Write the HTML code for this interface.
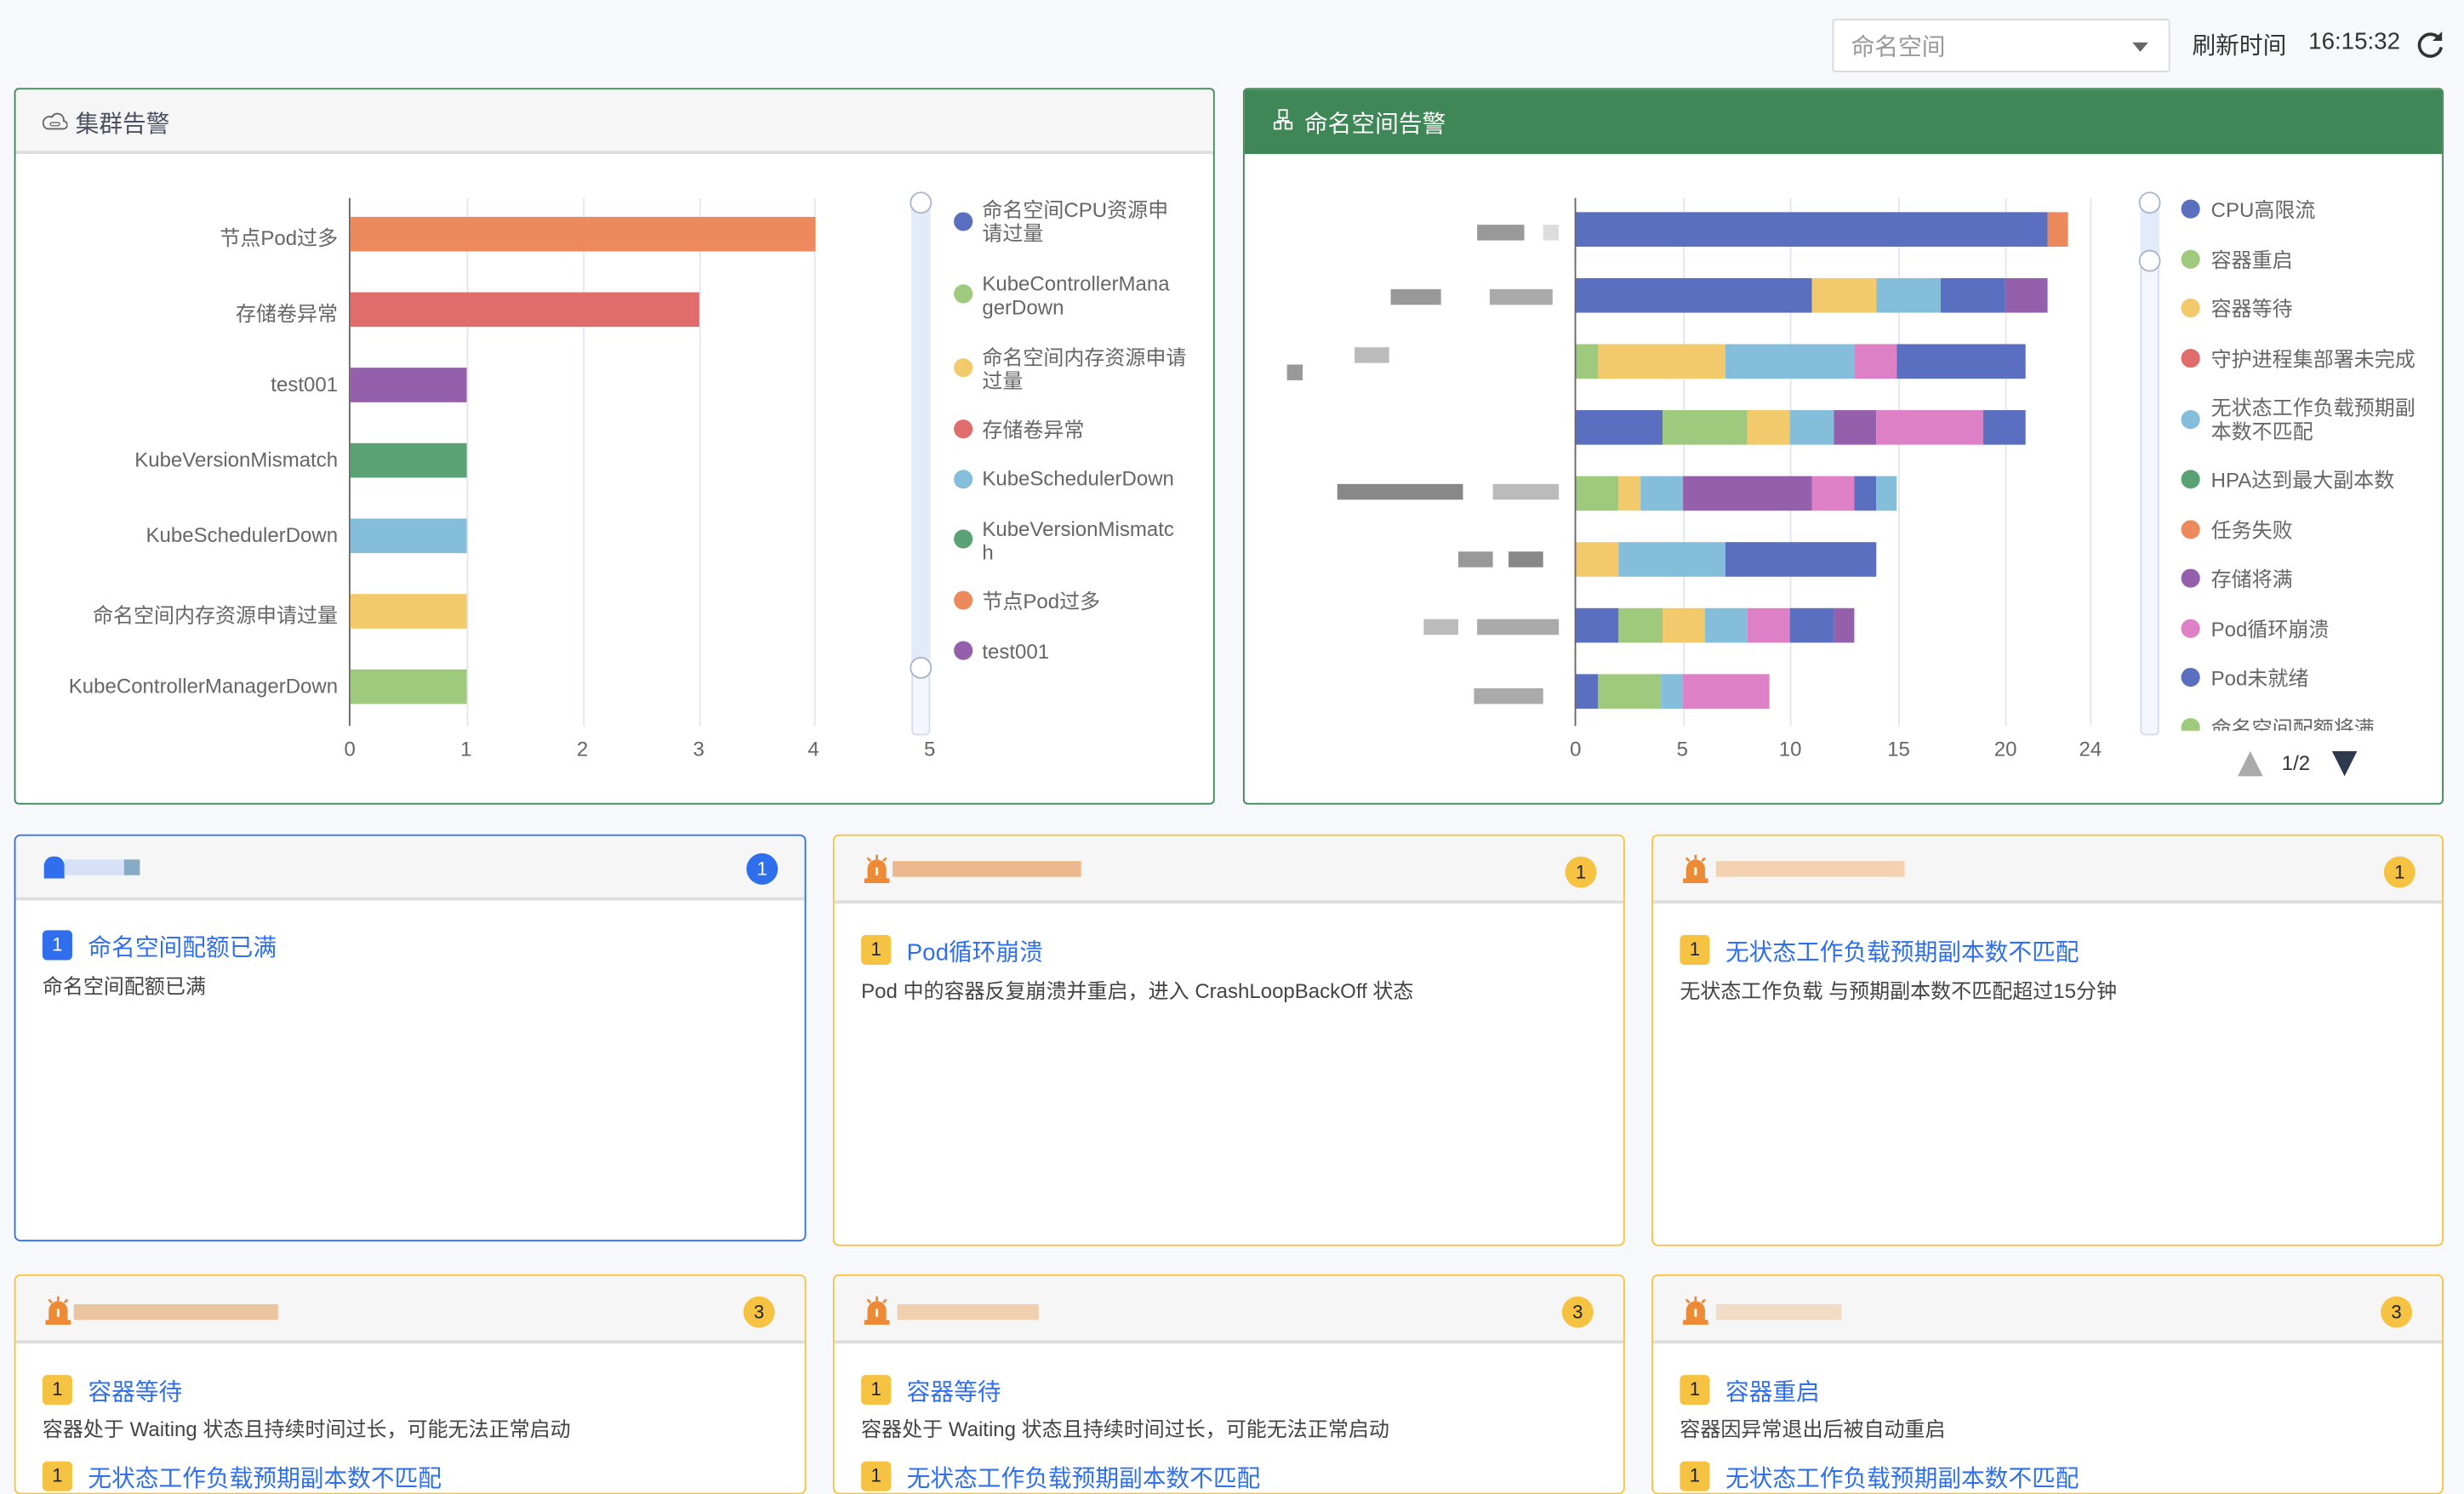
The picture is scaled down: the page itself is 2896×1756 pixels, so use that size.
<!DOCTYPE html>
<html><head><meta charset="utf-8"><style>
*{box-sizing:border-box;margin:0;padding:0}
html,body{width:2896px;height:1726px;overflow:hidden;background:#f6f8fb}
#w{position:absolute;left:0;top:0;width:1568px;height:935px;transform:scale(1.84694);transform-origin:0 0;font-family:"Liberation Sans","Noto Sans CJK SC",sans-serif;color:#555}
.a{position:absolute}
.card{position:absolute;background:#fff;border:1px solid #3f8756;border-radius:3px;overflow:hidden}
.hd{position:absolute;left:0;top:0;right:0;height:41px;background:#f6f6f6;border-bottom:2px solid #ddd;font-size:15px;color:#4a5060}
.grid{position:absolute;width:1px;background:#e4e6ee}
.lab{position:absolute;font-size:13px;color:#666;white-space:nowrap}
.rl{text-align:right}
.dot{position:absolute;width:12px;height:12px;border-radius:6px}
.lg{position:absolute;font-size:13px;color:#666;line-height:15px}
.row{position:absolute;height:22px;display:flex}
.row div{height:22px}
.B{background:#5a6fc0}.G{background:#9fca7d}.Y{background:#f2c96b}.L{background:#85bedb}.P{background:#9460ab}.K{background:#dd80c6}.O{background:#ec8a5d}
.ac{position:absolute;background:#fff;border:1px solid #f5c242;border-radius:4px;overflow:hidden}
.ac .h{position:absolute;left:0;right:0;top:0;height:43px;background:#f6f6f6;border-bottom:2px solid #ddd}
.bdg{position:absolute;width:20px;height:20px;border-radius:10px;background:#f5c242;color:#222;font-size:12px;text-align:center;line-height:20px}
.tag{position:absolute;width:19px;height:19px;border-radius:3px;background:#f5c242;color:#222;font-size:12px;text-align:center;line-height:19px}
.tt{position:absolute;font-size:15px;color:#2f6fed;white-space:nowrap}
.ds{position:absolute;font-size:13px;color:#444;white-space:nowrap}
.px{position:absolute;height:10px}
</style></head><body><div id="w">

<div class="a" style="left:1166px;top:12px;width:215px;height:34px;background:#fff;border:1px solid #d6d8dc;border-radius:2px"></div>
<div class="lab" style="left:1178px;top:19px;font-size:15px;color:#999">命名空间</div>
<div class="a" style="left:1357px;top:27px;width:0;height:0;border-left:5px solid transparent;border-right:5px solid transparent;border-top:6px solid #666"></div>
<div class="lab" style="left:1395px;top:18px;font-size:15px;color:#333">刷新时间</div>
<div class="lab" style="left:1469px;top:18px;font-size:15px;color:#333">16:15:32</div>
<svg class="a" style="left:1538px;top:19px" width="18" height="18" viewBox="0 0 18 18"><path d="M14.5 6A7 7 0 1 0 15.5 11" fill="none" stroke="#333" stroke-width="2"/><path d="M16 1v6h-6z" fill="#333"/></svg>

<div class="card" style="left:9px;top:56px;width:764px;height:456px">
 <div class="hd"><svg class="a" style="left:17px;top:13px" width="16" height="13" viewBox="0 0 16 13"><path d="M3 12h10a2.5 2.5 0 0 0 .5-5A4 4 0 0 0 6 4.5 3 3 0 0 0 3 12z" fill="none" stroke="#666"/><rect x="5" y="8" width="6" height="2" rx="1" fill="none" stroke="#666" stroke-width=".7"/></svg><span class="a" style="left:38px;top:11px">集群告警</span></div>
</div>
<div class="a" style="left:222px;top:126px;width:1px;height:336px;background:#666"></div>
<div class="grid" style="left:297px;top:126px;height:336px"></div>
<div class="grid" style="left:371px;top:126px;height:336px"></div>
<div class="grid" style="left:445px;top:126px;height:336px"></div>
<div class="grid" style="left:518px;top:126px;height:336px"></div>
<div class="a" style="left:223px;top:138px;width:296px;height:22px;background:#ec8a5d"></div>
<div class="a" style="left:223px;top:186px;width:222px;height:22px;background:#e06d6b"></div>
<div class="a" style="left:223px;top:234px;width:74px;height:22px;background:#9460ab"></div>
<div class="a" style="left:223px;top:282px;width:74px;height:22px;background:#5aa173"></div>
<div class="a" style="left:223px;top:330px;width:74px;height:22px;background:#85bedb"></div>
<div class="a" style="left:223px;top:378px;width:74px;height:22px;background:#f2c96b"></div>
<div class="a" style="left:223px;top:426px;width:74px;height:22px;background:#9fca7d"></div>
<div class="lab rl" style="right:1353px;top:141px">节点Pod过多</div>
<div class="lab rl" style="right:1353px;top:189px">存储卷异常</div>
<div class="lab rl" style="right:1353px;top:237px">test001</div>
<div class="lab rl" style="right:1353px;top:285px">KubeVersionMismatch</div>
<div class="lab rl" style="right:1353px;top:333px">KubeSchedulerDown</div>
<div class="lab rl" style="right:1353px;top:381px">命名空间内存资源申请过量</div>
<div class="lab rl" style="right:1353px;top:429px">KubeControllerManagerDown</div>
<div class="lab" style="left:219px;top:469px">0</div><div class="lab" style="left:293px;top:469px">1</div><div class="lab" style="left:367px;top:469px">2</div><div class="lab" style="left:441px;top:469px">3</div><div class="lab" style="left:514px;top:469px">4</div><div class="lab" style="left:588px;top:469px">5</div>
<div class="a" style="left:580px;top:129px;width:12px;height:339px;background:#f3f6fd;border:1px solid #d6dcea;border-radius:3px"></div>
<div class="a" style="left:580px;top:129px;width:12px;height:296px;background:#e3ebfb"></div>
<div class="a" style="left:579px;top:122px;width:14px;height:14px;border-radius:7px;background:#fff;border:1px solid #aab4c8"></div>
<div class="a" style="left:579px;top:418px;width:14px;height:14px;border-radius:7px;background:#fff;border:1px solid #aab4c8"></div>
<div class="dot" style="left:607px;top:135px;background:#5a6fc0"></div><div class="lg" style="left:625px;top:126px">命名空间CPU资源申<br>请过量</div>
<div class="dot" style="left:607px;top:181px;background:#9fca7d"></div><div class="lg" style="left:625px;top:173px">KubeControllerMana<br>gerDown</div>
<div class="dot" style="left:607px;top:228px;background:#f2c96b"></div><div class="lg" style="left:625px;top:220px">命名空间内存资源申请<br>过量</div>
<div class="dot" style="left:607px;top:267px;background:#e06d6b"></div><div class="lg" style="left:625px;top:266px">存储卷异常</div>
<div class="dot" style="left:607px;top:299px;background:#85bedb"></div><div class="lg" style="left:625px;top:297px">KubeSchedulerDown</div>
<div class="dot" style="left:607px;top:337px;background:#5aa173"></div><div class="lg" style="left:625px;top:329px">KubeVersionMismatc<br>h</div>
<div class="dot" style="left:607px;top:376px;background:#ec8a5d"></div><div class="lg" style="left:625px;top:375px">节点Pod过多</div>
<div class="dot" style="left:607px;top:408px;background:#9460ab"></div><div class="lg" style="left:625px;top:407px">test001</div>

<div class="card" style="left:791px;top:56px;width:764px;height:456px">
 <div class="hd" style="background:#3f8756;border-bottom:none;color:#fff"><svg class="a" style="left:18px;top:12px" width="14" height="15" viewBox="0 0 14 15"><rect x="4" y="1" width="5" height="5" fill="none" stroke="#fff"/><rect x="1" y="9" width="4" height="4" fill="none" stroke="#fff"/><rect x="8" y="9" width="4" height="4" fill="none" stroke="#fff"/><path d="M6.5 6v2M3 9V8h7v1" fill="none" stroke="#fff"/></svg><span class="a" style="left:38px;top:11px">命名空间告警</span></div>
</div>
<div class="a" style="left:1002px;top:126px;width:1px;height:336px;background:#666"></div>
<div class="grid" style="left:1071px;top:126px;height:336px"></div>
<div class="grid" style="left:1139px;top:126px;height:336px"></div>
<div class="grid" style="left:1208px;top:126px;height:336px"></div>
<div class="grid" style="left:1276px;top:126px;height:336px"></div>
<div class="grid" style="left:1330px;top:126px;height:336px"></div>
<div class="row" style="left:1003px;top:135px"><div class="B" style="width:299.8px"></div><div class="O" style="width:13.6px"></div></div>
<div class="row" style="left:1003px;top:177px"><div class="B" style="width:149.9px"></div><div class="Y" style="width:40.9px"></div><div class="L" style="width:40.9px"></div><div class="B" style="width:40.9px"></div><div class="P" style="width:27.3px"></div></div>
<div class="row" style="left:1003px;top:219px"><div class="G" style="width:13.6px"></div><div class="Y" style="width:81.8px"></div><div class="L" style="width:81.8px"></div><div class="K" style="width:27.3px"></div><div class="B" style="width:81.8px"></div></div>
<div class="row" style="left:1003px;top:261px"><div class="B" style="width:54.5px"></div><div class="G" style="width:54.5px"></div><div class="Y" style="width:27.3px"></div><div class="L" style="width:27.3px"></div><div class="P" style="width:27.3px"></div><div class="K" style="width:68.1px"></div><div class="B" style="width:27.3px"></div></div>
<div class="row" style="left:1003px;top:303px"><div class="G" style="width:27.3px"></div><div class="Y" style="width:13.6px"></div><div class="L" style="width:27.3px"></div><div class="P" style="width:81.8px"></div><div class="K" style="width:27.3px"></div><div class="B" style="width:13.6px"></div><div class="L" style="width:13.6px"></div></div>
<div class="row" style="left:1003px;top:345px"><div class="Y" style="width:27.3px"></div><div class="L" style="width:68.1px"></div><div class="B" style="width:95.4px"></div></div>
<div class="row" style="left:1003px;top:387px"><div class="B" style="width:27.3px"></div><div class="G" style="width:27.3px"></div><div class="Y" style="width:27.3px"></div><div class="L" style="width:27.3px"></div><div class="K" style="width:27.3px"></div><div class="B" style="width:27.3px"></div><div class="P" style="width:13.6px"></div></div>
<div class="row" style="left:1003px;top:429px"><div class="B" style="width:13.6px"></div><div class="G" style="width:40.9px"></div><div class="L" style="width:13.6px"></div><div class="K" style="width:54.5px"></div></div>
<div class="px" style="left:940px;top:143px;width:30px;background:#999"></div><div class="px" style="left:982px;top:143px;width:10px;background:#ddd"></div>
<div class="px" style="left:885px;top:184px;width:32px;background:#999"></div><div class="px" style="left:948px;top:184px;width:40px;background:#aaa"></div>
<div class="px" style="left:862px;top:221px;width:22px;background:#bbb"></div><div class="px" style="left:819px;top:232px;width:10px;background:#999"></div>
<div class="px" style="left:851px;top:308px;width:80px;background:#888"></div><div class="px" style="left:950px;top:308px;width:42px;background:#bbb"></div>
<div class="px" style="left:928px;top:351px;width:22px;background:#999"></div><div class="px" style="left:960px;top:351px;width:22px;background:#888"></div>
<div class="px" style="left:906px;top:394px;width:22px;background:#bbb"></div><div class="px" style="left:940px;top:394px;width:52px;background:#aaa"></div>
<div class="px" style="left:938px;top:438px;width:44px;background:#aaa"></div>
<div class="lab" style="left:999px;top:469px">0</div><div class="lab" style="left:1067px;top:469px">5</div><div class="lab" style="left:1132px;top:469px">10</div><div class="lab" style="left:1201px;top:469px">15</div><div class="lab" style="left:1269px;top:469px">20</div><div class="lab" style="left:1323px;top:469px">24</div>
<div class="a" style="left:1362px;top:129px;width:12px;height:339px;background:#f3f6fd;border:1px solid #d6dcea;border-radius:3px"></div>
<div class="a" style="left:1362px;top:129px;width:12px;height:37px;background:#e3ebfb"></div>
<div class="a" style="left:1361px;top:122px;width:14px;height:14px;border-radius:7px;background:#fff;border:1px solid #aab4c8"></div>
<div class="a" style="left:1361px;top:159px;width:14px;height:14px;border-radius:7px;background:#fff;border:1px solid #aab4c8"></div>
<div class="a" style="left:1380px;top:120px;width:170px;height:345px;overflow:hidden">
<div class="dot" style="left:8px;top:7px;background:#5a6fc0"></div><div class="lg" style="left:27px;top:6px">CPU高限流</div>
<div class="dot" style="left:8px;top:39px;background:#9fca7d"></div><div class="lg" style="left:27px;top:38px">容器重启</div>
<div class="dot" style="left:8px;top:70px;background:#f2c96b"></div><div class="lg" style="left:27px;top:69px">容器等待</div>
<div class="dot" style="left:8px;top:102px;background:#e06d6b"></div><div class="lg" style="left:27px;top:101px">守护进程集部署未完成</div>
<div class="dot" style="left:8px;top:141px;background:#85bedb"></div><div class="lg" style="left:27px;top:132px">无状态工作负载预期副<br>本数不匹配</div>
<div class="dot" style="left:8px;top:179px;background:#5aa173"></div><div class="lg" style="left:27px;top:178px">HPA达到最大副本数</div>
<div class="dot" style="left:8px;top:211px;background:#ec8a5d"></div><div class="lg" style="left:27px;top:210px">任务失败</div>
<div class="dot" style="left:8px;top:242px;background:#9460ab"></div><div class="lg" style="left:27px;top:241px">存储将满</div>
<div class="dot" style="left:8px;top:274px;background:#dd80c6"></div><div class="lg" style="left:27px;top:273px">Pod循环崩溃</div>
<div class="dot" style="left:8px;top:305px;background:#5a6fc0"></div><div class="lg" style="left:27px;top:304px">Pod未就绪</div>
<div class="dot" style="left:8px;top:337px;background:#9fca7d"></div><div class="lg" style="left:27px;top:336px">命名空间配额将满</div>
</div>
<div class="a" style="left:1424px;top:478px;border-left:8px solid transparent;border-right:8px solid transparent;border-bottom:16px solid #aaa"></div>
<div class="lab" style="left:1452px;top:478px;color:#333">1/2</div>
<div class="a" style="left:1484px;top:478px;border-left:8px solid transparent;border-right:8px solid transparent;border-top:16px solid #2e3b4e"></div>

<div class="ac" style="left:9px;top:531px;width:504px;height:259px;border-color:#2f6fed"><div class="h" style="height:41px"></div>
 <div class="a" style="left:18px;top:13px;width:13px;height:14px;background:#2f6fed;border-radius:6px 6px 0 0"></div>
 <div class="px" style="left:31px;top:15px;width:40px;background:#d6e0f6"></div><div class="px" style="left:69px;top:15px;width:10px;background:#88aac4"></div>
 <div class="bdg" style="left:465px;top:11px;background:#2f6fed;color:#fff">1</div>
 <div class="tag" style="left:17px;top:60px;background:#2f6fed;color:#fff">1</div>
 <div class="tt" style="left:46px;top:60px">命名空间配额已满</div>
 <div class="ds" style="left:17px;top:85px">命名空间配额已满</div></div>

<div class="ac" style="left:530px;top:531px;width:504px;height:262px"><div class="h"></div>
 <svg class="a" style="left:18px;top:11px" width="18" height="19" viewBox="0 0 18 19"><path d="M3 17V10a6 6 0 0 1 12 0v7z" fill="#ec8a36"/><rect x="1" y="16" width="16" height="3" fill="#ec8a36"/><rect x="8.2" y="9" width="1.6" height="5" fill="#fff"/><path d="M9 1v3M3 3l2 2M15 3l-2 2" stroke="#ec8a36" stroke-width="1.5"/></svg>
 <div class="px" style="left:37px;top:16px;width:120px;background:#eab88c"></div>
 <div class="bdg" style="left:465px;top:13px">1</div>
 <div class="tag" style="left:17px;top:63px">1</div>
 <div class="tt" style="left:46px;top:63px">Pod循环崩溃</div>
 <div class="ds" style="left:17px;top:88px">Pod 中的容器反复崩溃并重启，进入 CrashLoopBackOff 状态</div></div>

<div class="ac" style="left:1051px;top:531px;width:504px;height:262px"><div class="h"></div>
 <svg class="a" style="left:18px;top:11px" width="18" height="19" viewBox="0 0 18 19"><path d="M3 17V10a6 6 0 0 1 12 0v7z" fill="#ec8a36"/><rect x="1" y="16" width="16" height="3" fill="#ec8a36"/><rect x="8.2" y="9" width="1.6" height="5" fill="#fff"/><path d="M9 1v3M3 3l2 2M15 3l-2 2" stroke="#ec8a36" stroke-width="1.5"/></svg>
 <div class="px" style="left:40px;top:16px;width:120px;background:#f4d2b0"></div>
 <div class="bdg" style="left:465px;top:13px">1</div>
 <div class="tag" style="left:17px;top:63px">1</div>
 <div class="tt" style="left:46px;top:63px">无状态工作负载预期副本数不匹配</div>
 <div class="ds" style="left:17px;top:88px">无状态工作负载 与预期副本数不匹配超过15分钟</div></div>

<div class="ac" style="left:9px;top:811px;width:504px;height:140px"><div class="h"></div>
 <svg class="a" style="left:18px;top:12px" width="18" height="19" viewBox="0 0 18 19"><path d="M3 17V10a6 6 0 0 1 12 0v7z" fill="#ec8a36"/><rect x="1" y="16" width="16" height="3" fill="#ec8a36"/><rect x="8.2" y="9" width="1.6" height="5" fill="#fff"/><path d="M9 1v3M3 3l2 2M15 3l-2 2" stroke="#ec8a36" stroke-width="1.5"/></svg>
 <div class="px" style="left:37px;top:18px;width:130px;background:#ebc4a0"></div>
 <div class="bdg" style="left:463px;top:13px">3</div>
 <div class="tag" style="left:17px;top:63px">1</div>
 <div class="tt" style="left:46px;top:63px">容器等待</div>
 <div class="ds" style="left:17px;top:87px">容器处于 Waiting 状态且持续时间过长，可能无法正常启动</div>
 <div class="tag" style="left:17px;top:118px">1</div><div class="tt" style="left:46px;top:118px">无状态工作负载预期副本数不匹配</div></div>

<div class="ac" style="left:530px;top:811px;width:504px;height:140px"><div class="h"></div>
 <svg class="a" style="left:18px;top:12px" width="18" height="19" viewBox="0 0 18 19"><path d="M3 17V10a6 6 0 0 1 12 0v7z" fill="#ec8a36"/><rect x="1" y="16" width="16" height="3" fill="#ec8a36"/><rect x="8.2" y="9" width="1.6" height="5" fill="#fff"/><path d="M9 1v3M3 3l2 2M15 3l-2 2" stroke="#ec8a36" stroke-width="1.5"/></svg>
 <div class="px" style="left:40px;top:18px;width:90px;background:#efcfae"></div>
 <div class="bdg" style="left:463px;top:13px">3</div>
 <div class="tag" style="left:17px;top:63px">1</div>
 <div class="tt" style="left:46px;top:63px">容器等待</div>
 <div class="ds" style="left:17px;top:87px">容器处于 Waiting 状态且持续时间过长，可能无法正常启动</div>
 <div class="tag" style="left:17px;top:118px">1</div><div class="tt" style="left:46px;top:118px">无状态工作负载预期副本数不匹配</div></div>

<div class="ac" style="left:1051px;top:811px;width:504px;height:140px"><div class="h"></div>
 <svg class="a" style="left:18px;top:12px" width="18" height="19" viewBox="0 0 18 19"><path d="M3 17V10a6 6 0 0 1 12 0v7z" fill="#ec8a36"/><rect x="1" y="16" width="16" height="3" fill="#ec8a36"/><rect x="8.2" y="9" width="1.6" height="5" fill="#fff"/><path d="M9 1v3M3 3l2 2M15 3l-2 2" stroke="#ec8a36" stroke-width="1.5"/></svg>
 <div class="px" style="left:40px;top:18px;width:80px;background:#f2dcc6"></div>
 <div class="bdg" style="left:463px;top:13px">3</div>
 <div class="tag" style="left:17px;top:63px">1</div>
 <div class="tt" style="left:46px;top:63px">容器重启</div>
 <div class="ds" style="left:17px;top:87px">容器因异常退出后被自动重启</div>
 <div class="tag" style="left:17px;top:118px">1</div><div class="tt" style="left:46px;top:118px">无状态工作负载预期副本数不匹配</div></div>

</div></body></html>
